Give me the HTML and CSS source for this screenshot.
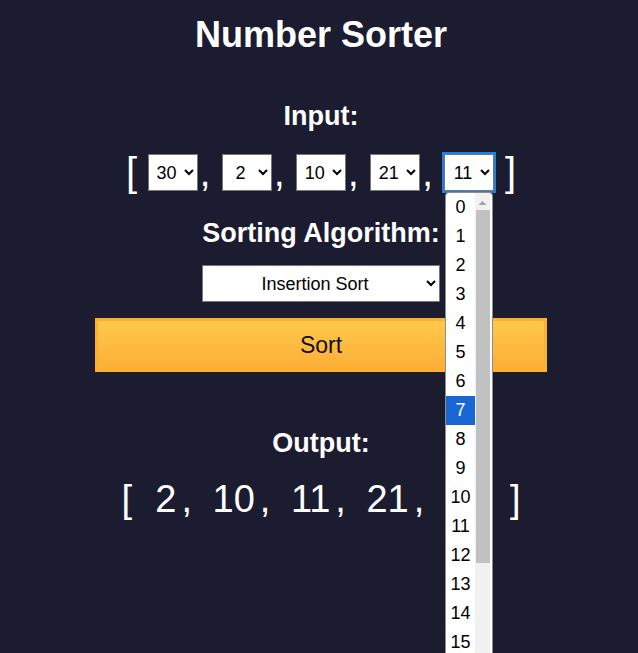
FILE: index.html
```html
<!DOCTYPE html>
<html lang="en">
<head>
<meta charset="utf-8">
<title>Number Sorter</title>
<link rel="stylesheet" href="styles.css">
</head>
<body>
<main class="app">
  <h1 class="title">Number Sorter</h1>
  <h2 class="label label-input">Input:</h2>
  <div class="input-row">
    <span class="br br-open">[</span>
    <select class="num"><option>30</option></select><span class="comma">,</span>
    <select class="num"><option>2</option></select><span class="comma">,</span>
    <select class="num"><option>10</option></select><span class="comma">,</span>
    <select class="num"><option>21</option></select><span class="comma">,</span>
    <select class="num num-focus"><option>11</option></select>
    <span class="br br-close">]</span>
  </div>
  <h2 class="label label-algo">Sorting Algorithm:</h2>
  <select class="algo"><option>Insertion Sort</option></select>
  <button class="sort-btn" type="button">Sort</button>
  <h2 class="label label-output">Output:</h2>
  <div class="output-row">
    <span class="obr obr-open">[</span>
    <span class="onum">2</span><span class="ocomma">,</span>
    <span class="onum">10</span><span class="ocomma">,</span>
    <span class="onum">11</span><span class="ocomma">,</span>
    <span class="onum">21</span><span class="ocomma">,</span>
    <span class="onum">30</span>
    <span class="obr obr-close">]</span>
  </div>
</main>

<div class="popup">
  <div class="popup-list">
    <div class="opt">0</div>
    <div class="opt">1</div>
    <div class="opt">2</div>
    <div class="opt">3</div>
    <div class="opt">4</div>
    <div class="opt">5</div>
    <div class="opt">6</div>
    <div class="opt opt-sel">7</div>
    <div class="opt">8</div>
    <div class="opt">9</div>
    <div class="opt">10</div>
    <div class="opt">11</div>
    <div class="opt">12</div>
    <div class="opt">13</div>
    <div class="opt">14</div>
    <div class="opt">15</div>
    <div class="opt">16</div>
  </div>
  <div class="scrollbar">
    <svg class="sb-arrow" width="15" height="14" viewBox="0 0 15 14"><polygon points="3.5,9 11.5,9 7.5,5" fill="#a3a3a3"/></svg>
    <div class="sb-thumb"></div>
  </div>
</div>
</body>
</html>
```
FILE: styles.css
```css
html, body {
  margin: 0;
  padding: 0;
}
body {
  background: #1c1c30;
  color: #ffffff;
  font-family: "Liberation Sans", Arial, sans-serif;
  height: 653px;
  overflow: hidden;
}
.app {
  display: flex;
  flex-direction: column;
  align-items: center;
  padding-top: 15px;
  padding-left: 4px;
}
.title {
  margin: 0;
  font-size: 36px;
  line-height: 40px;
  font-weight: bold;
}
.label {
  margin: 0;
  font-size: 27px;
  line-height: 32px;
  font-weight: bold;
}
.label-input { margin-top: 45px; }
.label-algo { margin-top: 26px; }
.label-output { margin-top: 55px; }

.input-row {
  display: flex;
  align-items: center;
  margin-top: 22px;
  font-size: 40px;
  line-height: 37px;
}
.br, .comma { display: block; }
.br-open { margin-right: 10.5px; }
.br-close { margin-left: 11px; }
.comma { margin-left: 2px; margin-right: 11px; }

.num {
  width: 50px;
  height: 37px;
  box-sizing: border-box;
  font-family: "Liberation Sans", Arial, sans-serif;
  font-size: 18px;
  color: #000;
  background: #ffffff;
  border: 1px solid #767676;
  border-radius: 0;
  text-align: center;
  text-align-last: center;
  padding: 0 2px;
  margin: 0;
}
.num-focus {
  outline: 2px solid #1f80e0;
  outline-offset: 0;
}
.algo {
  margin-top: 16px;
  width: 238px;
  height: 37px;
  box-sizing: border-box;
  font-family: "Liberation Sans", Arial, sans-serif;
  font-size: 18px;
  color: #000;
  background: #ffffff;
  border: 1px solid #767676;
  border-radius: 0;
  text-align: center;
  text-align-last: center;
}
.sort-btn {
  margin-top: 16px;
  width: 452px;
  height: 54px;
  box-sizing: border-box;
  border: 3px solid #fcb030;
  background: linear-gradient(#fec94c, #fdae35);
  font-family: "Liberation Sans", Arial, sans-serif;
  font-size: 23px;
  color: #111;
  padding: 0;
}

.output-row {
  display: flex;
  align-items: center;
  margin-top: 18px;
  font-size: 38px;
  line-height: 44px;
}
.obr, .onum, .ocomma { display: block; }
.obr-open { margin-right: 23.4px; }
.obr-close { margin-left: 23px; }
.ocomma { margin-left: 5px; margin-right: 20.5px; }

.popup {
  position: absolute;
  left: 445px;
  top: 192px;
  width: 48px;
  height: 480px;
  box-sizing: border-box;
  background: #ffffff;
  border: 1px solid #8d8d8d;
  border-radius: 4px 4px 0 0;
  display: flex;
  overflow: hidden;
  color: #000;
}
.popup-list {
  width: 29px;
  display: flex;
  flex-direction: column;
}
.opt {
  height: 29px;
  line-height: 29px;
  font-size: 18px;
  text-align: center;
}
.opt-sel {
  background: #1967d2;
  color: #ffffff;
}
.scrollbar {
  width: 15px;
  background: #f1f1f1;
  display: flex;
  flex-direction: column;
  align-items: center;
}
.sb-arrow { display: block; flex: none; margin-top: 3px; }
.sb-thumb {
  margin-top: 0;
  width: 14px;
  height: 353px;
  background: #c1c1c1;
}
```
